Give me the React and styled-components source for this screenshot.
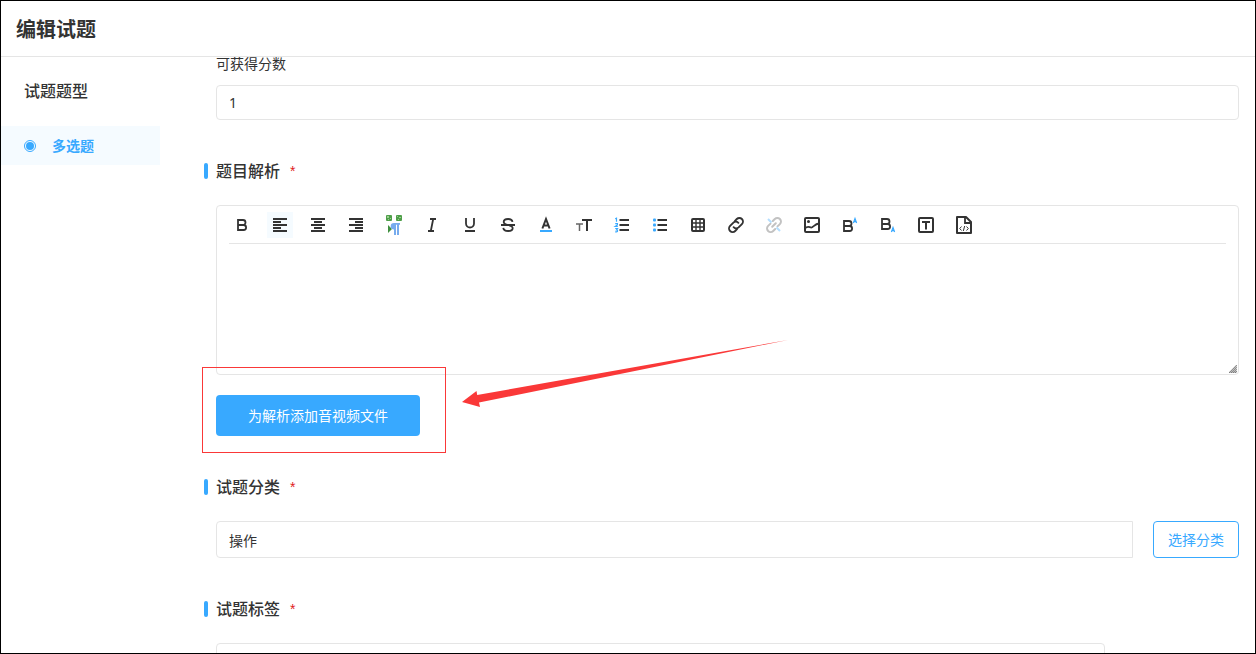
import React, { useState } from 'react'
import styled, { createGlobalStyle } from 'styled-components'

const BLUE = '#38a9ff'
const DARK = '#333333'
const LINE = '#e5e5e5'
const RED = '#fa3838'

const GlobalStyle = createGlobalStyle`
    *, *::before, *::after{
        box-sizing: border-box;
    }
    body{
        margin: 0;
        background-color: #ffffff;
        color: ${DARK};
        font-family: "Noto Sans", "Noto Sans CJK SC", sans-serif;
        font-size: 14px;
        line-height: 20px;
    }
    button, input, textarea{
        font: inherit;
        color: inherit;
        margin: 0;
    }
`

const Page = styled.div`
    display: flex;
    flex-direction: column;
    height: 100vh;
    border: 1px solid #000000;
    overflow: hidden;
`

const Header = styled.header`
    display: flex;
    align-items: center;
    flex: none;
    height: 56px;
    padding: 2px 15px 0;
    border-bottom: 1px solid ${LINE};

    h1{
        margin: 0;
        font-size: 20px;
        line-height: 28px;
        font-weight: 700;
    }
`

const Body = styled.div`
    display: flex;
    flex: 1;
    min-height: 0;
`

const Sidebar = styled.aside`
    flex: none;
    width: 159px;
    padding-top: 22px;

    h2{
        margin: 0 0 23px;
        padding-left: 23px;
        font-size: 16px;
        line-height: 24px;
        font-weight: 500;
    }
`

const TypeOption = styled.label`
    display: flex;
    align-items: center;
    gap: 16px;
    height: 39px;
    padding-left: 23px;
    background-color: #f5fbff;
    color: ${BLUE};
    font-weight: 700;
    cursor: pointer;
`

const Radio = styled.input`
    appearance: none;
    width: 12px;
    height: 12px;
    padding: 1px;
    border: 1px solid ${BLUE};
    border-radius: 50%;

    &:checked{
        background: ${BLUE} content-box;
    }
`

const Content = styled.main`
    flex: 1;
    min-width: 0;
    padding: 0 16px 0 56px;
`

const FieldLabel = styled.label`
    display: block;
    margin-bottom: 14px;
    line-height: 14px;
`

const TextInput = styled.input`
    display: block;
    flex: 1;
    width: 100%;
    min-width: 0;
    height: ${props => (props.$tall ? '37px' : '35px')};
    padding: 0 12px;
    border: 1px solid ${LINE};
    border-radius: ${props => (props.$square ? '4px 0 0 4px' : '4px')};
    background-color: #ffffff;
    outline: none;
`

const SectionTitle = styled.h3`
    display: flex;
    align-items: center;
    margin: 39px 0 22px -12px;
    font-size: 16px;
    line-height: 24px;
    font-weight: 500;

    &::before{
        content: '';
        width: 4px;
        height: 16px;
        margin-right: 8px;
        border-radius: 2px;
        background-color: ${BLUE};
    }
`

const Required = styled.span`
    margin-left: 10px;
    color: #e02020;
    font-family: "Liberation Sans", sans-serif;
    font-size: 14px;
    font-weight: 400;
`

const Editor = styled.div`
    position: relative;
    display: flex;
    flex-direction: column;
    height: 170px;
    padding: 0 12px;
    border: 1px solid ${LINE};
    border-radius: 4px;
`

const Toolbar = styled.div`
    display: flex;
    gap: 12px;
    padding: 6px 0 5px;
    border-bottom: 1px solid ${LINE};
`

const ToolButton = styled.button`
    flex: none;
    width: 26px;
    height: 26px;
    padding: 0;
    border: 0;
    background-color: ${props => (props.$active ? '#f5fbff' : 'transparent')};
    cursor: pointer;

    svg{
        display: block;
    }
`

const EditorText = styled.textarea`
    flex: 1;
    padding: 8px 0;
    border: 0;
    outline: none;
    resize: none;
    background: transparent;
`

const Grip = styled.svg`
    position: absolute;
    right: 1px;
    bottom: 1px;
`

const UploadRow = styled.div`
    position: relative;
    margin-top: 20px;
`

const UploadButton = styled.button`
    display: block;
    height: 41px;
    padding: 0 32px;
    border: 0;
    border-radius: 4px;
    background-color: ${BLUE};
    color: #ffffff;
    cursor: pointer;
`

const Highlight = styled.div`
    position: absolute;
    top: -28px;
    left: -14px;
    width: 244px;
    height: 86px;
    border: 1px solid ${RED};
    pointer-events: none;
`

const Arrow = styled.svg`
    position: absolute;
    top: -56px;
    left: 244px;
    pointer-events: none;
`

const CategoryRow = styled.div`
    display: flex;
    gap: 20px;
`

const OutlineButton = styled.button`
    flex: none;
    height: 37px;
    padding: 0 14px;
    border: 1px solid ${BLUE};
    border-radius: 4px;
    background-color: #ffffff;
    color: ${BLUE};
    cursor: pointer;
`

const TagBox = styled.div`
    height: 37px;
    margin-right: 134px;
    border: 1px solid ${LINE};
    border-radius: 4px;
`

const alignIcon = short => (
    <g fill={DARK} stroke="none">
        {[0, 1, 2, 3, 4].map(i => (
            <rect
                key={i}
                x={i % 2 ? short : 6}
                y={6 + i * 3}
                width={i % 2 ? 8 : 14}
                height="2"
            />
        ))}
    </g>
)

const chain = (
    <>
        <path d="M10.6 15.2a3.6 3.6 0 0 0 5 .2l3.300-3.300a3.600 3.600 0 0 0-5.100-5.100l-1.800 1.800" />
        <path d="M15.400 10.800a3.600 3.600 0 0 0-5-.2l-3.300 3.300a3.600 3.600 0 0 0 5.100 5.100l1.800-1.800" />
    </>
)

const tools = [
    { name: '加粗', icon: <path d="M9 8h5a2.4 2.4 0 0 1 0 5H9zM9 13h5.600a2.500 2.500 0 0 1 0 5H9z" strokeWidth="1.800" /> },
    { name: '左对齐', active: true, icon: alignIcon(6) },
    { name: '居中', icon: alignIcon(9) },
    { name: '右对齐', icon: alignIcon(12) },
    {
        name: '一键排版',
        icon: (
            <g stroke="none">
                <rect x="5" y="3" width="6" height="6" rx="1" fill="#4f9f4a" />
                <rect x="15" y="3" width="6" height="6" rx="1" fill="#4f9f4a" />
                <path d="M6 4h2v2H6zM9 6h1v1H9zM7 7h1v1H7zM16 4h1v1h-1zM18 5h2v1h-2zM17 7h1v1h-1z" fill="#9ad08e" />
                <path d="M7 13l4 4-4 4z" fill="#3f8f3f" />
                <path d="M19 11v1.800h-1V23h-2V12.800h-1V23h-2v-5.400a3.300 3.300 0 0 1 0-6.600z" fill="#77acee" />
            </g>
        ),
    },
    { name: '斜体', icon: <path d="M11 7h6M9 19h6M14.200 7l-2.400 12" strokeWidth="1.800" /> },
    { name: '下划线', icon: <path d="M9 6v5.500a4 4 0 0 0 8 0V6M8 19h10" strokeWidth="1.800" /> },
    {
        name: '删除线',
        icon: <path d="M17.500 9.800c-.3-1.800-2-2.800-4.400-2.800-2.700 0-4.400 1.200-4.400 3 0 3.800 9 2.200 9 6 0 1.900-1.800 3-4.500 3-2.800 0-4.700-1.200-4.900-3.200M6 13h14" strokeWidth="1.800" />,
    },
    {
        name: '文字颜色',
        icon: (
            <>
                <path d="M9.400 16.500L13 7l3.600 9.500M10.700 13.600h4.600" />
                <path d="M7 19h12" stroke={BLUE} />
            </>
        ),
    },
    {
        name: '字号',
        icon: (
            <>
                <path d="M11 8h10M16 8v11" />
                <path d="M5 12h7M8.500 12v7" stroke="#666666" strokeWidth="1.500" />
            </>
        ),
    },
    {
        name: '有序列表',
        icon: (
            <>
                <path d="M10.500 8h9.500M10.500 13h9.500M10.500 18h9.500" />
                <path
                    d="M6.200 6.700l1.300-.6v3.700M6.200 11.600h2.200v1.300l-2.200 1.600h2.600M6.200 16.500h2.300l-1 1.300c1.500 0 1.500 2 0 2H6.200"
                    stroke={BLUE}
                    strokeWidth="1.200"
                />
            </>
        ),
    },
    {
        name: '无序列表',
        icon: (
            <>
                <path d="M10.500 8h9.500M10.500 13h9.500M10.500 18h9.500" />
                <g fill={BLUE} stroke="none">
                    <rect x="6" y="6.500" width="3" height="3" rx="1" />
                    <rect x="6" y="11.500" width="3" height="3" rx="1" />
                    <rect x="6" y="16.500" width="3" height="3" rx="1" />
                </g>
            </>
        ),
    },
    {
        name: '表格',
        icon: (
            <>
                <rect x="7" y="7" width="12" height="12" rx="1" />
                <path d="M11 7v12M15 7v12M7 11h12M7 15h12" strokeWidth="1.400" />
            </>
        ),
    },
    { name: '链接', icon: <g strokeLinecap="round" strokeWidth="1.900">{chain}</g> },
    {
        name: '取消链接',
        icon: (
            <>
                <g stroke="#c2c2c2" strokeLinecap="round">
                    <path d="M16.500 14.400l2.400-2.300a3.600 3.600 0 0 0-5.100-5.100l-2 2" />
                    <path d="M9.500 11.600L7.100 13.900a3.600 3.600 0 0 0 5.100 5.100l2-2M11.200 14.800l3.600-3.600" />
                </g>
                <path d="M7 7l3.500 3.500M15.500 15.500L19 19" stroke="#b5defe" />
            </>
        ),
    },
    {
        name: '图片',
        icon: (
            <>
                <rect x="6" y="6" width="14" height="14" rx="1" />
                <circle cx="9.500" cy="9.500" r="1.500" fill={DARK} stroke="none" />
                <path d="M6 16.500c2.500-3 4-1.500 6-1s3.500-3.500 8-4" strokeWidth="1.800" />
            </>
        ),
    },
    {
        name: '上标',
        icon: (
            <>
                <path d="M7 9h5a2.400 2.400 0 0 1 0 5H7zM7 14h5.600a2.500 2.500 0 0 1 0 5H7z" strokeWidth="1.800" />
                <path d="M16.400 11l1.600-4.500 1.600 4.500M17 9.700h2" stroke={BLUE} strokeWidth="1.200" />
            </>
        ),
    },
    {
        name: '下标',
        icon: (
            <>
                <path d="M7 7h5a2.400 2.400 0 0 1 0 5H7zM7 12h5.600a2.500 2.500 0 0 1 0 5H7z" strokeWidth="1.800" />
                <path d="M16.400 20l1.600-4.500 1.600 4.500M17 18.700h2" stroke={BLUE} strokeWidth="1.200" />
            </>
        ),
    },
    {
        name: '文本框',
        icon: (
            <>
                <rect x="6" y="6" width="14" height="14" rx="1" />
                <path d="M9 10h8M13 10v7.500" />
            </>
        ),
    },
    {
        name: '源代码',
        icon: (
            <>
                <path d="M6 5h9l5 5v11H6z" strokeLinejoin="round" />
                <path d="M14 5v6h6" strokeWidth="1.800" />
                <path d="M10.500 14.500L8.700 16.500l1.800 2M15.500 14.500l1.800 2-1.800 2M13.700 14l-1.400 5" strokeWidth="1" />
            </>
        ),
    },
]

function Section({ title }) {
  return(
    <SectionTitle>
        {title}
        <Required>*</Required>
    </SectionTitle>
  )
}

export default function App() {
  const [score, setScore] = useState('1')
  const [category, setCategory] = useState('操作')

  return(
    <Page>
        <GlobalStyle />
        <Header>
            <h1>编辑试题</h1>
        </Header>
        <Body>
            <Sidebar>
                <h2>试题题型</h2>
                <TypeOption>
                    <Radio type="radio" name="type" defaultChecked />
                    多选题
                </TypeOption>
            </Sidebar>
            <Content>
                <FieldLabel htmlFor="score">可获得分数</FieldLabel>
                <TextInput id="score" value={score} onChange={e => setScore(e.target.value)} />

                <Section title="题目解析" />
                <Editor>
                    <Toolbar role="toolbar">
                        {tools.map(tool => (
                            <ToolButton key={tool.name} type="button" aria-label={tool.name} $active={tool.active}>
                                <svg width="26" height="26" viewBox="0 0 26 26" fill="none" stroke={DARK} strokeWidth="2">
                                    {tool.icon}
                                </svg>
                            </ToolButton>
                        ))}
                    </Toolbar>
                    <EditorText aria-label="题目解析" />
                    <Grip width="8" height="8" viewBox="0 0 8 8" stroke="#666666" strokeWidth="1.200" strokeDasharray="1 .4" aria-hidden="true">
                        <path d="M0 8L8 0M2 8l6-6M4 8l4-4M6 8l2-2" />
                    </Grip>
                </Editor>
                <UploadRow>
                    <UploadButton type="button">为解析添加音视频文件</UploadButton>
                    <Highlight />
                    <Arrow width="330" height="70" viewBox="0 0 330 70" fill={RED} aria-hidden="true">
                        <path d="M2 63L16.500 52l.7 4L328 1 19 63.500l1 4.500z" />
                    </Arrow>
                </UploadRow>

                {/* the highlight frame is out of flow, so the heading keeps its normal gap */}
                <Section title="试题分类" />
                <CategoryRow>
                    <TextInput
                        $tall
                        $square
                        aria-label="试题分类"
                        value={category}
                        onChange={e => setCategory(e.target.value)}
                    />
                    <OutlineButton type="button">选择分类</OutlineButton>
                </CategoryRow>

                <Section title="试题标签" />
                <TagBox />
            </Content>
        </Body>
    </Page>
  )
}
